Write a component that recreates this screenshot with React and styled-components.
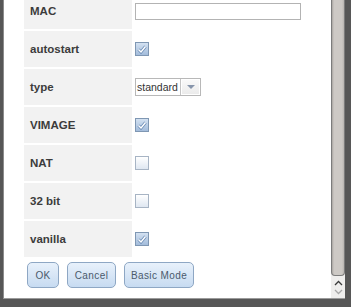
import React from 'react';
import styled, { createGlobalStyle } from 'styled-components';

const Global = createGlobalStyle`
  html, body {
    margin: 0;
    padding: 0;
    background: #575757;
    overflow: hidden;
  }
`;

const Frame = styled.div`
  width: 351px;
  height: 307px;
  background: #575757;
  display: flex;
  flex-direction: column;
`;

const Dialog = styled.div`
  display: flex;
  height: 299px;
  margin: 0 6px 0 3px;
  background: #fff;
  border-left: 1px solid #8c8c8c;
  border-bottom: 1px solid #9a9a9a;
  box-sizing: border-box;
`;

const Viewport = styled.div`
  flex: 1;
  overflow: hidden;
  padding-left: 20px;
`;

const Form = styled.div`
  display: grid;
  grid-template-columns: 108px 1fr;
  column-gap: 3px;
  row-gap: 2px;
  margin-top: -7px;
  grid-auto-rows: 36px;
`;

const Label = styled.div`
  background: #f2f2f2;
  display: flex;
  align-items: center;
  padding-left: 6px;
  font: bold 11.5px 'Liberation Sans', Arial, sans-serif;
  color: #3c3c3c;
`;

const Control = styled.div`
  display: flex;
  align-items: center;
`;

const TextInput = styled.div`
  width: 164px;
  height: 15px;
  border: 1px solid #b3b3b3;
  background: #fff;
`;

const Box = styled.span`
  width: 12px;
  height: 12px;
  border: 1px solid ${(p) => (p.$on ? '#7f97b3' : '#a7b4c4')};
  background: ${(p) =>
    p.$on
      ? 'linear-gradient(#d3e1f1, #a3bcdb)'
      : 'linear-gradient(#ffffff, #dfe7f1)'};
  display: flex;
  align-items: center;
  justify-content: center;
`;

const Select = styled.div`
  display: flex;
  height: 18px;
  border: 1px solid #b8b8b8;
  box-sizing: border-box;
  width: 66px;
  background: #fff;
`;

const SelectText = styled.span`
  flex: 1;
  font: 10.5px 'Liberation Sans', Arial, sans-serif;
  color: #333;
  padding-left: 1px;
  line-height: 16px;
`;

const SelectArrow = styled.span`
  width: 19px;
  border-left: 1px solid #c4c4c4;
  background: linear-gradient(#fafafa, #eaeaea);
  display: flex;
  align-items: center;
  justify-content: center;
  box-shadow: inset 0 0 0 1px #fff;
  &::after {
    content: '';
    border-left: 4px solid transparent;
    border-right: 4px solid transparent;
    border-top: 4px solid #8795ab;
  }
`;

const Buttons = styled.div`
  display: flex;
  gap: 8px;
  padding: 5px 0 0 3px;
`;

const Button = styled.button`
  height: 26px;
  width: ${(p) => p.$w}px;
  padding: 0;
  border: 1px solid #8ea7c4;
  border-radius: 5px;
  background: linear-gradient(#e8f1fb, #c7dbf1);
  font: 10px 'Liberation Sans', Arial, sans-serif;
  color: #4b5a6b;
  letter-spacing: 0.4px;
`;

const Scrollbar = styled.div`
  width: 14px;
  display: flex;
  flex-direction: column;
  background: #efeeed;
`;

const Thumb = styled.div`
  height: 276px;
  box-sizing: border-box;
  border: 1px solid #7c7c7c;
  border-top: none;
  border-radius: 0 0 4px 4px;
  background: linear-gradient(90deg, #a9a5a1 0, #cdc9c5 2px, #cdc9c5 10px, #b8b4b0 12px);
`;

const Arrows = styled.div`
  flex: 1;
  display: flex;
  flex-direction: column;
  align-items: center;
  padding-top: 4px;
  gap: 3px;
`;

const Check = () => (
  <svg width="10" height="9" viewBox="0 0 10 9">
    <path d="M1.5 4.5 L4 7 L8.5 1.5" fill="none" stroke="#6f8fb8" strokeWidth="3" />
    <path d="M1.5 4.5 L4 7 L8.5 1.5" fill="none" stroke="#fff" strokeWidth="1.4" />
  </svg>
);

const Chevron = ({ up, color }) => (
  <svg width="9" height="6" viewBox="0 0 9 6">
    <path
      d={up ? 'M1 5 L4.5 1.5 L8 5' : 'M1 1 L4.5 4.5 L8 1'}
      fill="none"
      stroke={color}
      strokeWidth="1.3"
    />
  </svg>
);

const CheckBox = ({ on }) => <Box $on={on}>{on && <Check />}</Box>;

const rows = [
  ['autostart', true],
  ['type', null],
  ['VIMAGE', true],
  ['NAT', false],
  ['32 bit', false],
  ['vanilla', true],
];

export default function App() {
  return (
    <Frame>
      <Global />
      <Dialog>
        <Viewport>
          <Form>
            <Label>MAC</Label>
            <Control>
              <TextInput />
            </Control>
            {rows.map(([name, val]) => (
              <React.Fragment key={name}>
                <Label>{name}</Label>
                <Control>
                  {val === null ? (
                    <Select>
                      <SelectText>standard</SelectText>
                      <SelectArrow />
                    </Select>
                  ) : (
                    <CheckBox on={val} />
                  )}
                </Control>
              </React.Fragment>
            ))}
          </Form>
          <Buttons>
            <Button $w={32}>OK</Button>
            <Button $w={49}>Cancel</Button>
            <Button $w={70}>Basic Mode</Button>
          </Buttons>
        </Viewport>
        <Scrollbar>
          <Thumb />
          <Arrows>
            <Chevron up color="#3a3a3a" />
            <Chevron color="#a8a8a8" />
          </Arrows>
        </Scrollbar>
      </Dialog>
    </Frame>
  );
}
